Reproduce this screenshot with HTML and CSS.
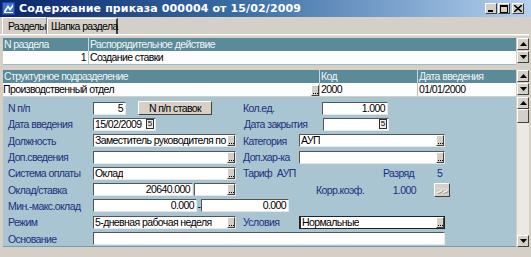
FILE: index.html
```html
<!DOCTYPE html>
<html lang="ru">
<head>
<meta charset="utf-8">
<title>Содержание приказа</title>
<link rel="stylesheet" href="styles.css">
</head>
<body>
<div class="window">
  <div class="titlebar">
    <svg class="appicon" width="13" height="13" viewBox="0 0 13 13">
      <rect x="0" y="0" width="13" height="13" fill="#1d3fae"/>
      <rect x="1" y="1" width="11" height="11" fill="#3a6fd8"/>
      <path d="M2 9 L6 3 L8 6 L11 2 L11 5 L8 9 L6 6 L3 11 Z" fill="#ffffff"/>
      <rect x="2" y="10" width="9" height="1" fill="#ffffff"/>
    </svg>
    <span class="title">Содержание приказа 000004 от 15/02/2009</span>
    <div class="wbtns">
      <span class="wbtn"><svg width="6" height="6" viewBox="0 0 6 6"><rect x="0" y="4" width="5" height="2" fill="#000"/></svg></span>
      <span class="wbtn"><svg width="8" height="8" viewBox="0 0 8 8"><rect x="0.5" y="0.5" width="7" height="7" fill="none" stroke="#000"/><rect x="0" y="0" width="8" height="2" fill="#000"/></svg></span>
      <span class="wbtn close"><svg width="8" height="7" viewBox="0 0 8 7"><path d="M0 0 L8 7 M8 0 L0 7" stroke="#000" stroke-width="1.6"/></svg></span>
    </div>
  </div>

  <div class="tabs">
    <div class="tab active">Разделы</div>
    <div class="tab second">Шапка раздела</div>
  </div>

  <div class="panel">
    <div class="grid g1">
      <div class="gmain">
        <div class="ghead">
          <div class="c w-n">N раздела</div>
          <div class="c fill">Распорядительное действие</div>
        </div>
        <div class="grow">
          <div class="c w-n num">1</div>
          <div class="c fill">Создание ставки</div>
        </div>
      </div>
      <div class="gscroll">
        <span class="sbtn"><svg width="7" height="4" viewBox="0 0 7 4"><path d="M0 4 L3.5 0 L7 4 Z" fill="#000"/></svg></span>
        <span class="sbtn"><svg width="7" height="4" viewBox="0 0 7 4"><path d="M0 0 L3.5 4 L7 0 Z" fill="#000"/></svg></span>
      </div>
    </div>

    <div class="grid g2">
      <div class="gmain">
        <div class="ghead">
          <div class="c w-dept">Структурное подразделение</div>
          <div class="c w-code">Код</div>
          <div class="c fill">Дата введения</div>
        </div>
        <div class="grow">
          <div class="c w-dept dept"><span>Производственный отдел</span><span class="dots"></span></div>
          <div class="c w-code">2000</div>
          <div class="c fill">01/01/2000</div>
        </div>
      </div>
      <div class="gscroll">
        <span class="sbtn"><svg width="7" height="4" viewBox="0 0 7 4"><path d="M0 4 L3.5 0 L7 4 Z" fill="#000"/></svg></span>
        <span class="sbtn"><svg width="7" height="4" viewBox="0 0 7 4"><path d="M0 0 L3.5 4 L7 0 Z" fill="#000"/></svg></span>
      </div>
    </div>

    <div class="formwrap">
      <div class="form">
        <div class="row">
          <span class="lbl">N п/п</span>
          <span class="inp num w33">5</span>
          <span class="btn">N п/п ставок</span>
          <span class="lbl r2">Кол.ед.</span>
          <span class="inp num w65">1.000</span>
        </div>
        <div class="row">
          <span class="lbl">Дата введения</span>
          <span class="inp w62 date">15/02/2009<span class="cal">5</span></span>
          <span class="lbl r2 gapdate">Дата закрытия</span>
          <span class="inp w65 date"><span class="cal">5</span></span>
        </div>
        <div class="row">
          <span class="lbl">Должность</span>
          <span class="inp w142 sel"><span class="txt">Заместитель руководителя по п</span><span class="dots"></span></span>
          <span class="lbl r3">Категория</span>
          <span class="inp w145 sel"><span class="txt">АУП</span><span class="dots"></span></span>
        </div>
        <div class="row">
          <span class="lbl">Доп.сведения</span>
          <span class="inp w142 sel"><span class="txt"></span><span class="dots"></span></span>
          <span class="lbl r3">Доп.хар-ка</span>
          <span class="inp w145 sel"><span class="txt"></span><span class="dots"></span></span>
        </div>
        <div class="row">
          <span class="lbl">Система оплаты</span>
          <span class="inp w142 sel"><span class="txt">Оклад</span><span class="dots"></span></span>
          <span class="lbl tarif">Тариф&nbsp; АУП</span>
          <span class="lbl razr">Разряд</span>
          <span class="lbl razrv">5</span>
        </div>
        <div class="row">
          <span class="lbl">Оклад/ставка</span>
          <span class="inp num w100">20640.000</span>
          <span class="inp w42 sel"><span class="txt"></span><span class="dots"></span></span>
          <span class="lbl korr">Корр.коэф.</span>
          <span class="lbl korrv">1.000</span>
          <span class="btn small">&gt;&gt;</span>
        </div>
        <div class="row">
          <span class="lbl">Мин.-макс.оклад</span>
          <span class="inp num w104">0.000</span>
          <span class="dash">-</span>
          <span class="inp num w88">0.000</span>
        </div>
        <div class="row">
          <span class="lbl">Режим</span>
          <span class="inp w142 sel"><span class="txt">5-дневная рабочая неделя</span><span class="dots"></span></span>
          <span class="lbl r3">Условия</span>
          <span class="inp w145 sel focus"><span class="txt">Нормальные</span><span class="dots"></span></span>
        </div>
        <div class="row">
          <span class="lbl">Основание</span>
          <span class="inp w351"></span>
        </div>
      </div>
      <div class="vscroll">
        <span class="sbtn"><svg width="7" height="4" viewBox="0 0 7 4"><path d="M0 4 L3.5 0 L7 4 Z" fill="#000"/></svg></span>
        <span class="thumb"></span>
        <span class="track"></span>
        <span class="sbtn"><svg width="7" height="4" viewBox="0 0 7 4"><path d="M0 0 L3.5 4 L7 0 Z" fill="#000"/></svg></span>
      </div>
    </div>
  </div>
</div>
</body>
</html>
```

FILE: styles.css
```css
* { box-sizing: border-box; }
html, body { margin: 0; padding: 0; }
body {
  width: 531px;
  height: 257px;
  overflow: hidden;
  background: #d4d0c8;
  font-family: "Liberation Sans", Arial, sans-serif;
  font-size: 10.5px;
  letter-spacing: -0.6px;
  color: #000;
}
.window {
  width: 531px;
  height: 257px;
  display: flex;
  flex-direction: column;
  background: #d4d0c8;
}

/* title bar */
.titlebar {
  height: 17px;
  flex: none;
  display: flex;
  align-items: center;
  background: linear-gradient(to right, #0a246a 0%, #3a6ea5 45%, #b4d0ee 100%);
  padding-left: 2px;
  padding-right: 7px;
}
.appicon { flex: none; margin-right: 4px; }
.title {
  color: #fff;
  font-family: "DejaVu Sans", "Liberation Sans", sans-serif;
  font-weight: bold;
  font-size: 11px;
  letter-spacing: 0.12px;
  white-space: nowrap;
}
.wbtns { margin-left: auto; display: flex; gap: 1px; }
.wbtn {
  width: 12px;
  height: 11px;
  background: #d4d0c8;
  border: 1px solid;
  border-color: #fff #404040 #404040 #fff;
  display: flex;
  align-items: center;
  justify-content: center;
}
.wbtn.close { margin-left: 1px; }

/* tabs */
.tabs {
  height: 17px;
  flex: none;
  display: flex;
  align-items: flex-end;
  padding-left: 2px;
}
.tab {
  height: 16px;
  padding: 0 0 0 3px;
  line-height: 15px;
  border-top: 1px solid #fff;
  border-left: 1px solid #fff;
  border-right: 2px solid #404040;
  white-space: nowrap;
}
.tab.active {
  width: 45px;
  height: 17px;
  padding-left: 5px;
  border-right: 1px solid #808080;
  line-height: 16px;
}
.tab.second { width: 71px; }

/* panel */
.panel {
  flex: 1;
  border-top: 1px solid #fff;
  box-shadow: inset 0 1px 0 #e8e6e0;
  margin-right: 2px;
  padding: 3px 0 0 3px;
  display: flex;
  flex-direction: column;
}
.grid { display: flex; }
.gmain { flex: 1; display: flex; flex-direction: column; }
.ghead, .grow { display: flex; height: 13px; }
.ghead { background: #5b8b98; color: #eef4f6; }
.grow { background: #fdfdfd; }
.c {
  height: 13px;
  line-height: 13px;
  white-space: nowrap;
  overflow: hidden;
  padding-left: 1px;
}
.ghead .c + .c { border-left: 1px solid #c9dadf; }
.grow .c + .c { border-left: 1px solid #c0c0c0; }
.num { text-align: right; padding-right: 2px; }
.fill { flex: 1; }
.w-n { width: 85px; }
.w-dept { width: 316px; }
.w-code { width: 98px; }
.dept { display: flex; justify-content: space-between; align-items: flex-end; padding-left: 0; }
.g1 .grow { border-bottom: 1px solid #9ebdc6; height: 14px; }
.g2 { margin-top: 5px; }
.g2 .grow { height: 13px; }

.gscroll { width: 12px; display: flex; flex-direction: column; gap: 1px; margin: 0 0 0 1px; }
.sbtn {
  width: 12px;
  height: 12px;
  background: #d4d0c8;
  border: 1px solid;
  border-color: #fff #404040 #404040 #fff;
  display: flex;
  align-items: center;
  justify-content: center;
  flex: none;
}

.dots {
  width: 8px;
  height: 11px;
  flex: none;
  background: #d4d0c8;
  border: 1px solid;
  border-color: #fff #404040 #404040 #fff;
  position: relative;
}
.dots::after {
  content: "";
  position: absolute;
  left: 1px;
  bottom: 1px;
  width: 5px;
  height: 1px;
  background: repeating-linear-gradient(to right, #000 0 1px, transparent 1px 2px);
}

/* form */
.formwrap {
  margin-top: 1px;
  display: flex;
  height: 150px;
  flex: none;
}
.form {
  flex: 1;
  background: #a8c5d1;
  padding: 3px 0 0 5px;
  border-bottom: 1px solid #7d9aa6;
}
.row {
  height: 16.3px;
  display: flex;
  align-items: center;
  white-space: nowrap;
}
.lbl { color: #1e2f80; flex: none; }
.row > .lbl:first-child { width: 85px; }
.inp {
  flex: none;
  height: 13px;
  line-height: 11px;
  background: #fff;
  border: 1px solid;
  border-color: #555 #e8e8e8 #e8e8e8 #555;
  display: flex;
  align-items: center;
  overflow: hidden;
  padding-left: 1px;
}
.inp.num { justify-content: flex-end; padding-right: 2px; }
.inp.sel { justify-content: space-between; padding-right: 0; }
.inp.sel .txt { overflow: hidden; }
.inp.date { justify-content: space-between; padding-right: 1px; }
.inp.focus { border-color: #222 #222 #222 #222; border-left-width: 2px; }
.cal {
  width: 8px;
  height: 10px;
  border: 1px solid #303030;
  font-size: 8px;
  line-height: 8px;
  letter-spacing: 0;
  text-align: center;
  background: #eee;
}
.inp.date:not(:has(+ *)) .cal { margin-left: auto; }
.w33 { width: 33px; }
.w42 { width: 42px; margin-left: 1px; }
.w62 { width: 63px; }
.w65 { width: 66px; }
.w88 { width: 88px; }
.w100 { width: 100px; }
.w104 { width: 104px; }
.w142 { width: 143px; }
.w145 { width: 146px; }
.w351 { width: 352px; }

.btn {
  flex: none;
  height: 14px;
  width: 74px;
  margin-left: 12px;
  background: #d8d0c6;
  border: 1px solid;
  border-color: #fff #404040 #404040 #fff;
  text-align: center;
  line-height: 12px;
}
.btn.small {
  width: 16px;
  height: 14px;
  margin-left: 18px;
  color: #f4f4f0;
  text-shadow: 1px 1px 0 #a09c94;
  line-height: 12px;
  background: #d4d0c8;
}
.r2 { width: 79px; margin-left: 31px; }
.gapdate { margin-left: 88px; }
.r3 { width: 56px; margin-left: 7px; }
.tarif { margin-left: 7px; width: 140px; }
.razr { width: 54px; }
.korr { margin-left: 80px; width: 58px; }
.korrv { width: 42px; text-align: right; }
.dash { width: 4px; text-align: center; flex: none; }

.vscroll {
  width: 12px;
  margin-left: 1px;
  display: flex;
  flex-direction: column;
  background: #ece9e2;
}
.thumb {
  height: 14px;
  flex: none;
  background: #d4d0c8;
  border: 1px solid;
  border-color: #fff #404040 #404040 #fff;
}
.track { flex: 1; }
```
